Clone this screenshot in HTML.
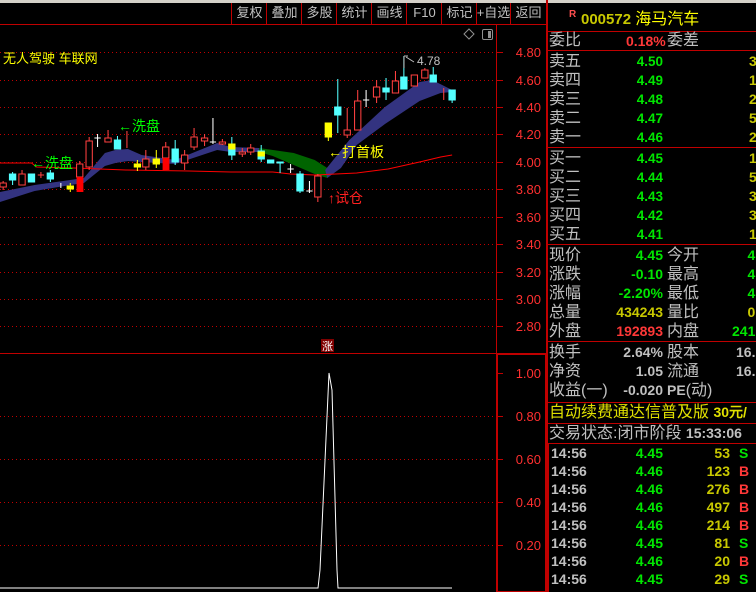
<!DOCTYPE html>
<html><head><meta charset="utf-8"><style>
*{margin:0;padding:0;box-sizing:border-box}
body{width:756px;height:592px;background:#000;overflow:hidden;position:relative;font-family:"Liberation Sans","Noto Sans CJK SC",sans-serif}
.t{position:absolute;white-space:nowrap;line-height:18px}
.cn{font-size:16px;color:#c0c0c0}
.n{font-size:14px;font-weight:bold;font-family:"Liberation Sans",sans-serif}
.g{color:#00e600}.y{color:#c8c800}.r{color:#ff3838}.w{color:#c0c0c0}
.hl{position:absolute;left:547px;width:209px;height:1px;background:#c00000}
.tb{position:absolute;top:4px;font-size:13px;color:#c0c0c0;text-align:center;width:35px;line-height:18px;white-space:nowrap;overflow:visible}
</style></head><body>
<svg width="756" height="592" style="position:absolute;left:0;top:0">
<rect x="0" y="0" width="756" height="3" fill="#d4d0c8"/>
<line x1="0" y1="24.5" x2="547" y2="24.5" stroke="#c00000"/>
<g stroke="#c00000">
<line x1="231.5" y1="3" x2="231.5" y2="24"/><line x1="266.5" y1="3" x2="266.5" y2="24"/><line x1="301.5" y1="3" x2="301.5" y2="24"/><line x1="336.5" y1="3" x2="336.5" y2="24"/><line x1="371.5" y1="3" x2="371.5" y2="24"/><line x1="406.5" y1="3" x2="406.5" y2="24"/><line x1="441.5" y1="3" x2="441.5" y2="24"/><line x1="476.5" y1="3" x2="476.5" y2="24"/><line x1="510.5" y1="3" x2="510.5" y2="24"/>
</g>
<line x1="496.5" y1="25" x2="496.5" y2="592" stroke="#c00000"/>
<line x1="0" y1="353.5" x2="497" y2="353.5" stroke="#c00000"/>
<rect x="497" y="354" width="49" height="238" fill="none" stroke="#c00000" stroke-width="2"/>
<line x1="547" y1="0" x2="547" y2="592" stroke="#c00000" stroke-width="2"/>
<line x1="547.5" y1="443" x2="547.5" y2="592" stroke="#c00000" stroke-width="3"/>
<g stroke="#c00000" stroke-dasharray="1,3">
<line x1="0" y1="52.5" x2="496" y2="52.5"/><line x1="0" y1="80.5" x2="496" y2="80.5"/><line x1="0" y1="107.5" x2="496" y2="107.5"/><line x1="0" y1="134.5" x2="496" y2="134.5"/><line x1="0" y1="162.5" x2="496" y2="162.5"/><line x1="0" y1="189.5" x2="496" y2="189.5"/><line x1="0" y1="217.5" x2="496" y2="217.5"/><line x1="0" y1="244.5" x2="496" y2="244.5"/><line x1="0" y1="272.5" x2="496" y2="272.5"/><line x1="0" y1="299.5" x2="496" y2="299.5"/><line x1="0" y1="326.5" x2="496" y2="326.5"/>
<line x1="0" y1="416.5" x2="496" y2="416.5"/><line x1="0" y1="459.5" x2="496" y2="459.5"/><line x1="0" y1="502.5" x2="496" y2="502.5"/><line x1="0" y1="545.5" x2="496" y2="545.5"/>
</g>
<g stroke="#c00000">
<line x1="497" y1="52.5" x2="503" y2="52.5"/><line x1="497" y1="80.5" x2="503" y2="80.5"/><line x1="497" y1="107.5" x2="503" y2="107.5"/><line x1="497" y1="134.5" x2="503" y2="134.5"/><line x1="497" y1="162.5" x2="503" y2="162.5"/><line x1="497" y1="189.5" x2="503" y2="189.5"/><line x1="497" y1="217.5" x2="503" y2="217.5"/><line x1="497" y1="244.5" x2="503" y2="244.5"/><line x1="497" y1="272.5" x2="503" y2="272.5"/><line x1="497" y1="299.5" x2="503" y2="299.5"/><line x1="497" y1="326.5" x2="503" y2="326.5"/>
<line x1="497" y1="373.5" x2="503" y2="373.5"/><line x1="497" y1="416.5" x2="503" y2="416.5"/><line x1="497" y1="459.5" x2="503" y2="459.5"/><line x1="497" y1="502.5" x2="503" y2="502.5"/><line x1="497" y1="545.5" x2="503" y2="545.5"/>
</g>
<g fill="#ff3030" font-family="Liberation Sans" font-size="13" text-anchor="end">
<text x="541" y="57">4.80</text><text x="541" y="85">4.60</text><text x="541" y="112">4.40</text><text x="541" y="139">4.20</text><text x="541" y="167">4.00</text><text x="541" y="194">3.80</text><text x="541" y="222">3.60</text><text x="541" y="249">3.40</text><text x="541" y="277">3.20</text><text x="541" y="304">3.00</text><text x="541" y="331">2.80</text>
<text x="541" y="378">1.00</text><text x="541" y="421">0.80</text><text x="541" y="464">0.60</text><text x="541" y="507">0.40</text><text x="541" y="550">0.20</text>
</g>
<path d="M469 29 L474 34 L469 39 L464 34 Z" fill="none" stroke="#909090"/>
<rect x="482.5" y="29.5" width="10" height="10" rx="1.5" fill="none" stroke="#909090"/>
<rect x="488" y="31" width="3" height="7" fill="#909090"/>
<g transform="scale(1.049,1)">
<polygon fill="#333380" points="0,192 33,185 67,180 80,178 100,153 110,150 122,149 135,155 167,160 207,143 220,147 247,148 247,152 220,152 207,150 167,164 135,162 122,161 110,163 100,166 80,183 67,185 33,191 0,202"/>
<polygon fill="#006400" points="247,148 280,153 300,160 312,168 318,170 312,178 300,174 280,165 260,156 247,152"/>
<polygon fill="#333380" points="310,170 333,140 367,107 400,82 412,80 431,90 431,92 420,93 400,101 367,124 340,145 325,168 312,178"/>
<polyline fill="none" stroke="#ff0000" points="0,163 30,163 35,167 70,168 120,170 180,171 220,172 260,172 277,174 300,175 320,174 340,173 370,169 400,162 420,157 431,155"/>
<g stroke-width="1">
<g stroke="#ff4040" fill="#000">
<line x1="3" y1="181" x2="3" y2="190"/><rect x="0" y="183" width="6" height="4"/>
<line x1="21" y1="170" x2="21" y2="185"/><rect x="18" y="174" width="6" height="11"/>
<line x1="36" y1="175" x2="42" y2="175"/><line x1="39" y1="172" x2="39" y2="178"/>
<line x1="76" y1="161" x2="76" y2="192"/><rect x="73" y="164" width="6" height="13"/>
<line x1="85" y1="137" x2="85" y2="170"/><rect x="82" y="141" width="6" height="26"/>
<line x1="103" y1="130" x2="103" y2="142"/><rect x="100" y="138" width="6" height="4"/>
<line x1="121" y1="131" x2="121" y2="148"/>
<line x1="139" y1="150" x2="139" y2="170"/><rect x="136" y="159" width="6" height="8"/>
<line x1="158" y1="142" x2="158" y2="170"/><rect x="155" y="147" width="6" height="11"/>
<line x1="176" y1="150" x2="176" y2="170"/><rect x="173" y="155" width="6" height="8"/>
<line x1="185" y1="128" x2="185" y2="150"/><rect x="182" y="137" width="6" height="10"/>
<line x1="195" y1="134" x2="195" y2="146"/><rect x="192" y="138" width="6" height="3"/>
<line x1="212" y1="139" x2="212" y2="145"/><rect x="209" y="142" width="6" height="2"/>
<line x1="231" y1="148" x2="231" y2="157"/><rect x="228" y="152" width="6" height="2"/>
<line x1="239" y1="144" x2="239" y2="155"/><rect x="236" y="148" width="6" height="4"/>
<line x1="303" y1="174" x2="303" y2="202"/><rect x="300" y="176" width="6" height="21"/>
<line x1="331" y1="108" x2="331" y2="138"/><rect x="328" y="130" width="6" height="5"/>
<line x1="341" y1="90" x2="341" y2="130"/><rect x="338" y="101" width="6" height="29"/>
<line x1="359" y1="80" x2="359" y2="103"/><rect x="356" y="87" width="6" height="10"/>
<line x1="377" y1="71" x2="377" y2="93"/><rect x="374" y="81" width="6" height="12"/>
<line x1="395" y1="75" x2="395" y2="86"/><rect x="392" y="75" width="6" height="11"/>
<line x1="405" y1="68" x2="405" y2="78"/><rect x="402" y="70" width="6" height="8"/>
<line x1="423" y1="88" x2="423" y2="100"/>
</g>
<g fill="#ff0000"><rect x="73" y="177" width="6.5" height="15"/><rect x="155" y="158" width="6.5" height="12"/></g>
<g stroke="#54ffff" fill="#54ffff">
<line x1="12" y1="172" x2="12" y2="185"/><rect x="9" y="174" width="6" height="6"/>
<rect x="27" y="174" width="6" height="8"/>
<line x1="48" y1="170" x2="48" y2="182"/><rect x="45" y="173" width="6" height="6"/>
<line x1="112" y1="136" x2="112" y2="149"/><rect x="109" y="140" width="6" height="9"/>
<line x1="167" y1="140" x2="167" y2="165"/><rect x="164" y="149" width="6" height="13"/>
<line x1="221" y1="137" x2="221" y2="160"/><rect x="218" y="149" width="6" height="6"/>
<line x1="249" y1="145" x2="249" y2="162"/><rect x="246" y="151" width="6" height="8"/>
<rect x="255" y="160" width="6" height="3"/>
<line x1="267" y1="162" x2="267" y2="173"/><rect x="264" y="162" width="6" height="1"/>
<line x1="286" y1="171" x2="286" y2="193"/><rect x="283" y="174" width="6" height="17"/>
<line x1="322" y1="79" x2="322" y2="133"/><rect x="319" y="107" width="6" height="8"/>
<line x1="368" y1="78" x2="368" y2="100"/><rect x="365" y="88" width="6" height="4"/>
<line x1="385" y1="56" x2="385" y2="89"/><rect x="382" y="77" width="6" height="12"/>
<line x1="413" y1="67" x2="413" y2="82"/><rect x="410" y="75" width="6" height="7"/>
<line x1="431" y1="90" x2="431" y2="103"/><rect x="428" y="90" width="6" height="10"/>
</g>
<g stroke="#ffff00" fill="#ffff00">
<line x1="67" y1="183" x2="67" y2="192"/><rect x="64" y="186" width="6" height="3"/>
<line x1="131" y1="160" x2="131" y2="171"/><rect x="128" y="164" width="6" height="3"/>
<line x1="149" y1="150" x2="149" y2="168"/><rect x="146" y="159" width="6" height="5"/>
<rect x="218" y="144" width="6" height="5"/>
<rect x="246" y="152" width="6" height="4"/>
<line x1="313" y1="123" x2="313" y2="141"/><rect x="310" y="123" width="6" height="14"/>
</g>
<g stroke="#ffffff">
<line x1="58" y1="183" x2="58" y2="188"/>
<line x1="93" y1="134" x2="93" y2="147"/><line x1="90" y1="138" x2="96" y2="138"/>
<line x1="203" y1="118" x2="203" y2="144"/><line x1="200" y1="142" x2="206" y2="142"/>
<line x1="277" y1="164" x2="277" y2="173"/><line x1="274" y1="169" x2="280" y2="169"/>
<line x1="295" y1="181" x2="295" y2="193"/><line x1="292" y1="191" x2="298" y2="191"/>
<line x1="349" y1="90" x2="349" y2="107"/><line x1="346" y1="100" x2="352" y2="100"/>
</g>
</g>
</g>
<polyline fill="none" stroke="#ffffff" points="0,588 318,588 320,570 329,373 332,390 337,570 338,588 452,588"/>
<rect x="321" y="339" width="13" height="13" fill="#800000"/>
<text x="322" y="350" font-size="11" fill="#fff" font-family="Noto Sans CJK SC">涨</text>
<g font-family="Liberation Sans,Noto Sans CJK SC" font-size="14">
<text x="3" y="63" fill="#ffff00" font-size="13">无人驾驶 车联网</text>
<text x="118" y="131" fill="#00ff00">←洗盘</text>
<text x="31" y="168" fill="#00ff00">←洗盘</text>
<text x="328" y="157" fill="#ffff00">←打首板</text>
<text x="328" y="203" fill="#ff2020">↑试仓</text>
<text x="417" y="65" fill="#c0c0c0" font-size="12">4.78</text>
</g>
<line x1="404" y1="56" x2="404" y2="68" stroke="#c0c0c0"/>
<line x1="404" y1="56" x2="408" y2="56" stroke="#c0c0c0"/>
<line x1="406" y1="57" x2="414" y2="62" stroke="#c0c0c0"/>
</svg>
<div class="tb" style="left:232px">复权</div><div class="tb" style="left:267px">叠加</div><div class="tb" style="left:302px">多股</div><div class="tb" style="left:337px">统计</div><div class="tb" style="left:372px">画线</div><div class="tb" style="left:407px">F10</div><div class="tb" style="left:442px">标记</div><div class="tb" style="left:476px">+自选</div><div class="tb" style="left:511px">返回</div>

<div class="t" style="left:569px;top:6px;font-size:10px;color:#ff5050;font-weight:bold">R</div>
<div class="t n y" style="left:581px;top:8px;font-size:15px">000572 <span style="font-weight:normal;font-size:16px;font-family:'Noto Sans CJK SC',sans-serif;color:#ffff00">海马汽车</span></div>
<div class="hl" style="top:31px"></div>
<div class="hl" style="top:50px"></div>
<div class="hl" style="top:147px"></div>
<div class="hl" style="top:244px"></div>
<div class="hl" style="top:341px"></div>
<div class="hl" style="top:402px"></div>
<div class="hl" style="top:423px"></div>
<div class="hl" style="top:443px"></div>

<div class="t cn" style="left:549px;top:32px">委比</div>
<div class="t n r" style="left:626px;top:32px">0.18%</div><div class="t cn" style="left:667px;top:32px">委差</div>

<div class="t cn" style="left:549px;top:52px;line-height:19px">卖五<br>卖四<br>卖三<br>卖二<br>卖一</div>
<div class="t n g" style="left:631px;top:52px;text-align:right;line-height:19px;width:32px;font-size:13.5px">4.50<br>4.49<br>4.48<br>4.47<br>4.46</div>
<div class="t n y" style="left:749px;top:52px;line-height:19px">3<br>1<br>2<br>5<br>2</div>
<div class="t cn" style="left:549px;top:149px;line-height:19px">买一<br>买二<br>买三<br>买四<br>买五</div>
<div class="t n g" style="left:631px;top:149px;text-align:right;line-height:19px;width:32px;font-size:13.5px">4.45<br>4.44<br>4.43<br>4.42<br>4.41</div>
<div class="t n y" style="left:749px;top:149px;line-height:19px">1<br>5<br>3<br>3<br>1</div>
<div class="t cn" style="left:549px;top:246px;line-height:19px">现价<br>涨跌<br>涨幅<br>总量<br>外盘</div>
<div class="t n" style="right:93px;top:246px;text-align:right;line-height:19px"><span class="g">4.45</span><br><span class="g">-0.10</span><br><span class="g">-2.20%</span><br><span class="y">434243</span><br><span class="r">192893</span></div>
<div class="t cn" style="left:667px;top:246px;line-height:19px">今开<br>最高<br>最低<br>量比<br>内盘</div>
<div class="t n" style="left:732px;top:246px;line-height:19px"><span class="g">&nbsp;&nbsp;&nbsp;&nbsp;4</span><br><span class="g">&nbsp;&nbsp;&nbsp;&nbsp;4</span><br><span class="g">&nbsp;&nbsp;&nbsp;&nbsp;4</span><br><span class="y">&nbsp;&nbsp;&nbsp;&nbsp;0</span><br><span class="g">241</span></div>
<div class="t cn" style="left:549px;top:343px;line-height:19px">换手<br>净资<br>收益(一)</div>
<div class="t n w" style="right:93px;top:343px;text-align:right;line-height:19px">2.64%<br>1.05<br>-0.020</div>
<div class="t cn" style="left:667px;top:343px;line-height:19px">股本<br>流通<br><span class="n">PE</span>(动)</div>
<div class="t n w" style="left:736px;top:343px;line-height:19px">16.<br>16.</div>
<div class="t cn" style="left:549px;top:403px;color:#e0e000">自动续费通达信普及版 <span class="n" style="color:#e0e000">30元/</span></div>
<div class="t cn" style="left:549px;top:424px">交易状态:闭市阶段 <span class="n">15:33:06</span></div>

<div class="t n w" style="left:551px;top:444px;line-height:18px">14:56<br>14:56<br>14:56<br>14:56<br>14:56<br>14:56<br>14:56<br>14:56</div>
<div class="t n g" style="right:93px;top:444px;text-align:right;line-height:18px">4.45<br>4.46<br>4.46<br>4.46<br>4.46<br>4.45<br>4.46<br>4.45</div>
<div class="t n y" style="right:26px;top:444px;text-align:right;line-height:18px">53<br>123<br>276<br>497<br>214<br>81<br>20<br>29</div>
<div class="t n" style="left:739px;top:444px;line-height:18px"><span class="g">S</span><br><span class="r">B</span><br><span class="r">B</span><br><span class="r">B</span><br><span class="r">B</span><br><span class="g">S</span><br><span class="r">B</span><br><span class="g">S</span></div>
</body></html>
